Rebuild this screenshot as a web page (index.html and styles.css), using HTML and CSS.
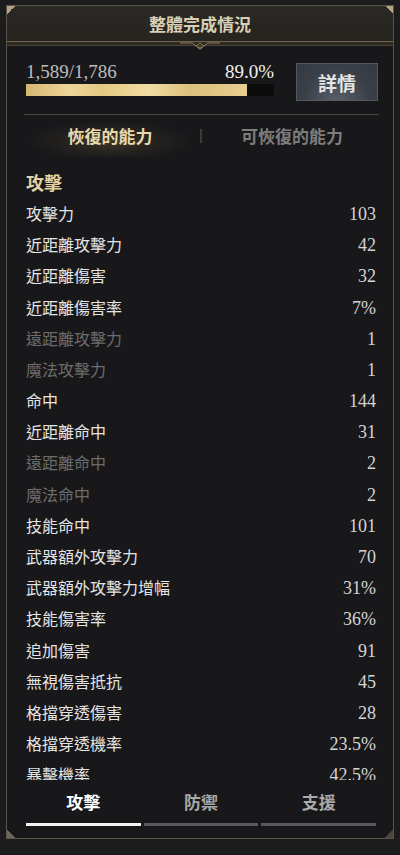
FILE: index.html
```html
<!DOCTYPE html>
<html lang="zh-Hant">
<head>
<meta charset="utf-8">
<link rel="stylesheet" href="styles.css">
</head>
<body>
<div class="panel">
  <span class="corner tl"></span><span class="corner tr"></span><span class="corner bl"></span><span class="corner br"></span>
  <div class="header">整體完成情況</div>
  <div class="divider">
    <svg class="ornament" width="40" height="12" viewBox="0 0 40 12">
      <path d="M0 3 L12 3 L16 6 L20 3 L24 6 L28 3 L40 3" fill="none" stroke="#8a7b58" stroke-width="1"/>
      <path d="M14 5 L20 10 L26 5 L20 7 Z" fill="#7a6c4c"/>
    </svg>
  </div>
  <div class="summary">
    <div class="progress">
      <div class="nums"><span class="count">1,589/1,786</span><span class="pct">89.0%</span></div>
      <div class="bar"><div class="fill" style="width:89%"></div></div>
    </div>
    <div class="details">詳情</div>
  </div>
  <div class="rule"></div>
  <div class="subtabs">
    <div class="subtab active">恢復的能力</div>
    <div class="sep"></div>
    <div class="subtab">可恢復的能力</div>
  </div>
  <div class="list">
    <div class="section">攻擊</div>
    <div class="row"><span>攻擊力</span><span class="v">103</span></div>
    <div class="row"><span>近距離攻擊力</span><span class="v">42</span></div>
    <div class="row"><span>近距離傷害</span><span class="v">32</span></div>
    <div class="row"><span>近距離傷害率</span><span class="v">7%</span></div>
    <div class="row dim"><span>遠距離攻擊力</span><span class="v">1</span></div>
    <div class="row dim"><span>魔法攻擊力</span><span class="v">1</span></div>
    <div class="row"><span>命中</span><span class="v">144</span></div>
    <div class="row"><span>近距離命中</span><span class="v">31</span></div>
    <div class="row dim"><span>遠距離命中</span><span class="v">2</span></div>
    <div class="row dim"><span>魔法命中</span><span class="v">2</span></div>
    <div class="row"><span>技能命中</span><span class="v">101</span></div>
    <div class="row"><span>武器額外攻擊力</span><span class="v">70</span></div>
    <div class="row"><span>武器額外攻擊力增幅</span><span class="v">31%</span></div>
    <div class="row"><span>技能傷害率</span><span class="v">36%</span></div>
    <div class="row"><span>追加傷害</span><span class="v">91</span></div>
    <div class="row"><span>無視傷害抵抗</span><span class="v">45</span></div>
    <div class="row"><span>格擋穿透傷害</span><span class="v">28</span></div>
    <div class="row"><span>格擋穿透機率</span><span class="v">23.5%</span></div>
    <div class="row"><span>暴擊機率</span><span class="v">42.5%</span></div>
  </div>
  <div class="tabs">
    <div class="tab active">攻擊</div>
    <div class="tab">防禦</div>
    <div class="tab">支援</div>
  </div>
</div>
</body>
</html>
```
FILE: styles.css
```css
html, body {
  margin: 0;
  padding: 0;
  background: #1c1c1d;
  width: 400px;
  height: 855px;
  overflow: hidden;
  font-family: "Noto Sans CJK TC", "Noto Sans", sans-serif;
}
.panel {
  position: relative;
  margin: 5px 6px 0;
  height: 834px;
  box-sizing: border-box;
  border: 1px solid #5a5347;
  background: #18181b;
  display: flex;
  flex-direction: column;
}
.corner {
  position: absolute;
  width: 8px;
  height: 8px;
}
.corner.tl { left: 0; top: 0; background: linear-gradient(135deg, #b3a586 50%, transparent 50%); }
.corner.tr { right: 0; top: 0; background: linear-gradient(225deg, #b3a586 50%, transparent 50%); }
.corner.bl { left: 0; bottom: 0; background: linear-gradient(45deg, #6e665a 50%, transparent 50%); }
.corner.br { right: 0; bottom: 0; background: linear-gradient(315deg, #4a453d 50%, transparent 50%); }
.header {
  height: 35px;
  flex: none;
  display: flex;
  align-items: center;
  justify-content: center;
  font-size: 17px;
  font-weight: bold;
  color: #d9cfb6;
  background: linear-gradient(180deg, #2a2925 0%, #25241f 100%);
}
.divider {
  position: relative;
  flex: none;
  height: 3px;
  border-top: 1px solid #6e6450;
  border-bottom: 1px solid #4a4234;
  background: #2e2a22;
}
.ornament {
  position: absolute;
  left: 50%;
  top: -2px;
  transform: translateX(-50%);
}
.summary {
  flex: none;
  display: flex;
  align-items: flex-start;
  padding: 16px 15px 0 19px;
  height: 52px;
}
.progress {
  width: 248px;
}
.nums {
  display: flex;
  justify-content: space-between;
  align-items: flex-end;
  font-family: "Liberation Serif", "DejaVu Serif", serif;
  font-size: 19px;
  line-height: 20px;
  height: 20px;
}
.count { color: #bdbdbd; }
.pct { color: #f0f0f0; }
.bar {
  margin-top: 2px;
  height: 12px;
  background: #0b0b0c;
}
.fill {
  height: 100%;
  background: linear-gradient(90deg, #d6b872 0%, #ecd599 20%, #e4c882 35%, #f0dca4 55%, #dcc07c 75%, #e8cf90 100%);
}
.details {
  margin-left: auto;
  margin-top: 1px;
  width: 80px;
  height: 36px;
  border: 1px solid #535963;
  background: radial-gradient(ellipse at 50% 110%, #5a616b 0%, #3b4048 60%, #353a42 100%);
  color: #e4e4e4;
  font-size: 19px;
  font-weight: bold;
  display: flex;
  align-items: center;
  justify-content: center;
}
.rule {
  flex: none;
  margin: 0 14px 0 17px;
  height: 1px;
  background: #4a4438;
}
.subtabs {
  flex: none;
  display: flex;
  align-items: center;
  height: 42px;
  padding: 0 11px 0 13px;
}
.subtab {
  width: 180px;
  text-align: center;
  font-size: 17px;
  font-weight: bold;
  color: #7d7d7d;
  line-height: 42px;
}
.subtab.active {
  color: #e6d8ab;
  background: radial-gradient(ellipse 45% 50% at 50% 62%, rgba(150, 125, 65, 0.30) 0%, rgba(150, 125, 65, 0.10) 55%, rgba(150, 125, 65, 0) 100%);
}
.sep {
  width: 2px;
  height: 14px;
  background: #3a3a3a;
}
.list {
  flex: 1;
  overflow: hidden;
  padding: 0 17px 0 19px;
  min-height: 0;
}
.section {
  height: 40.4px;
  box-sizing: border-box;
  padding-top: 15px;
  line-height: 20px;
  font-size: 18px;
  font-weight: bold;
  color: #e2d4a2;
}
.row {
  height: 31.2px;
  display: flex;
  align-items: center;
  justify-content: space-between;
  font-size: 16px;
  color: #e4e4e4;
}
.row .v {
  font-family: "Liberation Serif", "DejaVu Serif", serif;
  font-size: 18px;
  color: #d4d4d4;
  padding-top: 3px;
}
.row.dim span:first-child { color: #6c6c6c; }
.tabs {
  flex: none;
  display: flex;
  gap: 3px;
  padding: 0 17px 12px 19px;
  height: 58px;
  box-sizing: border-box;
}
.tab {
  flex: 1;
  text-align: center;
  font-size: 17px;
  font-weight: bold;
  color: #a9a9a9;
  border-bottom: 3px solid #58595d;
  line-height: 43px;
}
.tab.active {
  color: #ffffff;
  border-bottom-color: #f4f4f4;
}
```
